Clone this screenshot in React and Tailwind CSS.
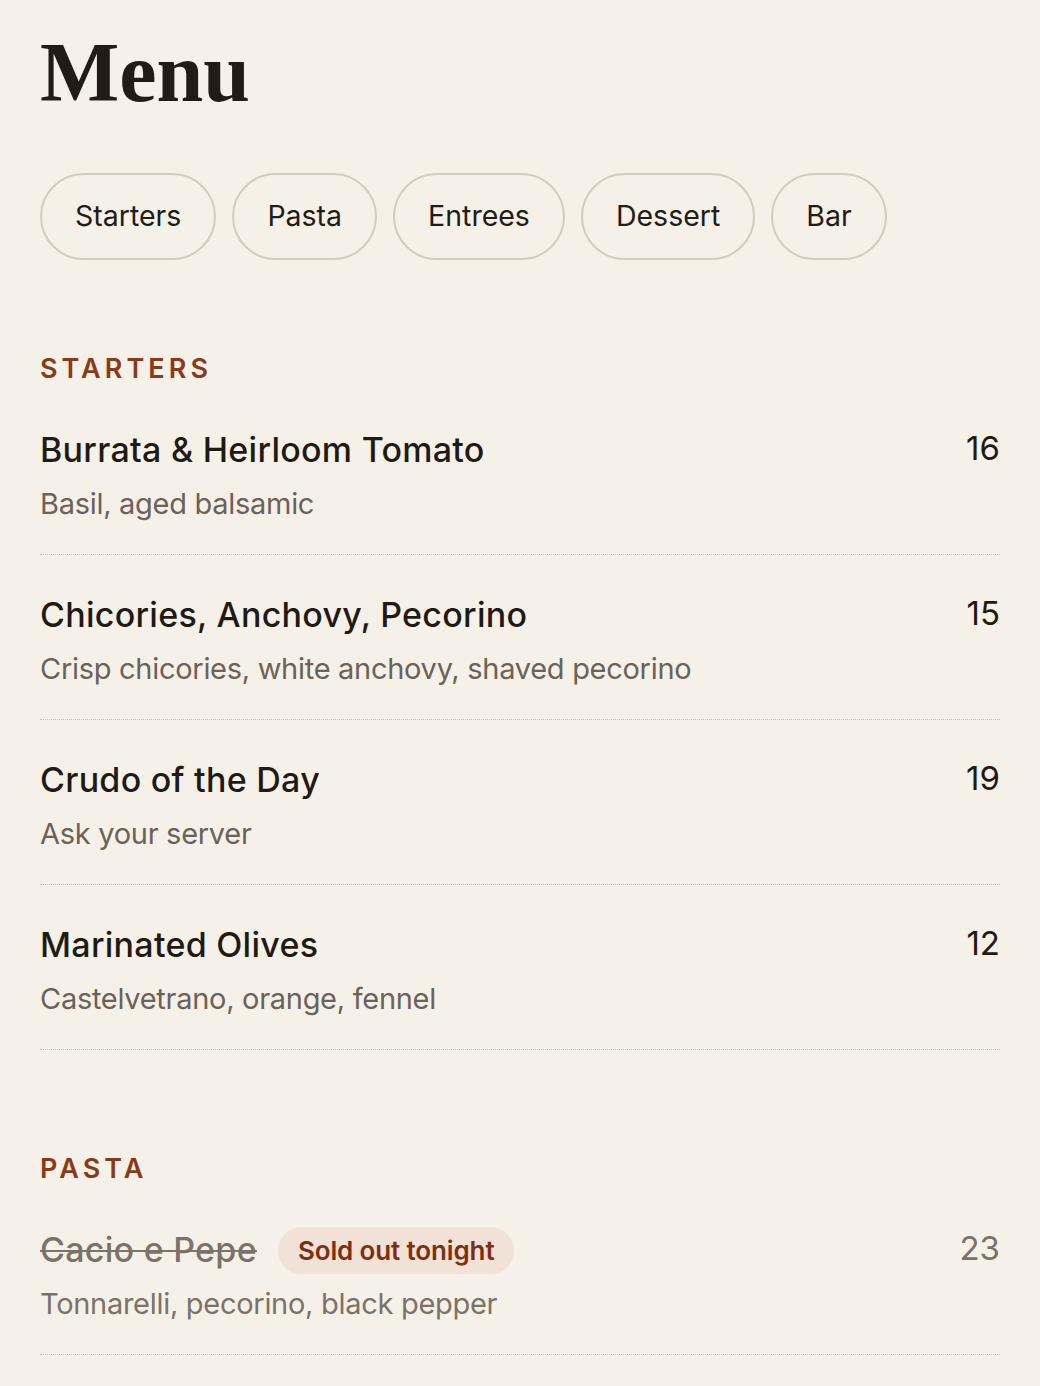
const tabs = ["Starters", "Pasta", "Entrees", "Dessert", "Bar"];

const starters = [
  { name: "Burrata & Heirloom Tomato", desc: "Basil, aged balsamic", price: 16 },
  { name: "Chicories, Anchovy, Pecorino", desc: "Crisp chicories, white anchovy, shaved pecorino", price: 15 },
  { name: "Crudo of the Day", desc: "Ask your server", price: 19 },
  { name: "Marinated Olives", desc: "Castelvetrano, orange, fennel", price: 12 },
];

const pasta = [
  { name: "Cacio e Pepe", desc: "Tonnarelli, pecorino, black pepper", price: 23, soldOut: true },
];

function Item({ item }) {
  return (
    <div className="flex justify-between pt-[38px] pb-[30px] border-b border-dotted border-[#c9c1b6]">
      <div className="flex flex-col gap-[12px]">
        <div className="flex items-center gap-[21px] h-[44px]">
          <span
            className={
              item.soldOut
                ? "text-[34px] leading-[44px] font-medium tracking-[0.008em] text-[#7b7369] line-through decoration-2"
                : "text-[34px] leading-[44px] font-medium tracking-[0.008em] text-[#1f1a14]"
            }
          >
            {item.name}
          </span>
          {item.soldOut && (
            <span className="h-[47px] px-[20px] flex items-center rounded-full bg-[#f1e1d6] text-[#7e2f12] text-[26px] font-semibold tracking-[-0.005em]">
              Sold out tonight
            </span>
          )}
        </div>
        <span
          className={
            item.soldOut
              ? "text-[29px] leading-[40px] tracking-[-0.01em] text-[#7b7369]"
              : "text-[29px] leading-[40px] tracking-[-0.01em] text-[#6b6259]"
          }
        >
          {item.desc}
        </span>
      </div>
      <span
        className={
          item.soldOut
            ? "text-[33px] leading-[40px] text-[#7b7369]"
            : "text-[33px] leading-[40px] text-[#1f1a14]"
        }
      >
        {item.price}
      </span>
    </div>
  );
}

function Section({ title, items }) {
  return (
    <section>
      <h2 className="text-[27px] leading-[42px] font-semibold tracking-[0.15em] text-[#8a3a18]">{title}</h2>
      {items.map((it) => (
        <Item key={it.name} item={it} />
      ))}
    </section>
  );
}

export default function App() {
  return (
    <div className="min-h-screen bg-[#f6f1e8] px-[40px] pt-[28px] pb-[40px] font-['Inter',sans-serif]">
      <h1 className="font-['Liberation_Serif',serif] font-bold text-[84px] leading-[90px] text-[#211c16]">
        Menu
      </h1>
      <div className="flex gap-[16px] mt-[55px]">
        {tabs.map((t) => (
          <button
            key={t}
            className="h-[87px] px-[33px] rounded-full border-2 border-[#d4ccbf] text-[28.5px] text-[#211c16]"
          >
            {t}
          </button>
        ))}
      </div>
      <div className="mt-[88px] flex flex-col gap-[98px]">
        <Section title="STARTERS" items={starters} />
        <Section title="PASTA" items={pasta} />
      </div>
    </div>
  );
}
